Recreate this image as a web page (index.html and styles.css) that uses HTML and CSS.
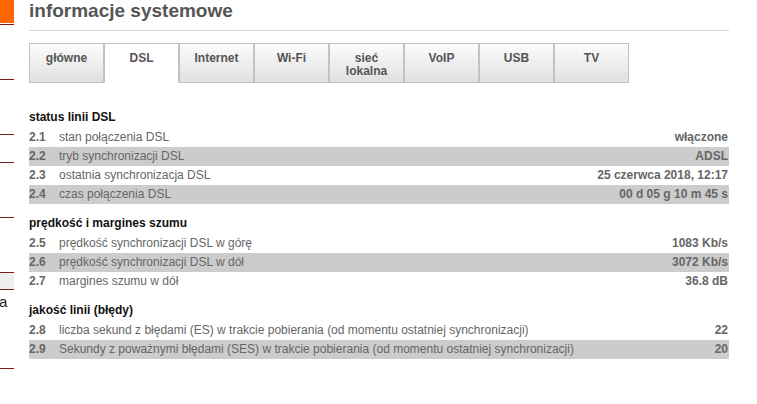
FILE: index.html
```html
<!DOCTYPE html>
<html lang="pl">
<head>
<meta charset="utf-8">
<title>informacje systemowe</title>
<link rel="stylesheet" href="styles.css">
</head>
<body>
<div class="page">
  <nav class="side">
    <div class="side-logo"></div>
    <div class="side-item h55"></div>
    <div class="side-item h55"></div>
    <div class="side-item h28"></div>
    <div class="side-item h55"></div>
    <div class="side-item h55"></div>
    <div class="side-item side-last">
      <div class="side-band"></div>
      <div class="side-text">a</div>
    </div>
  </nav>
  <main class="content">
    <h1 class="title">informacje systemowe</h1>
    <ul class="tabs">
      <li class="tab">główne</li>
      <li class="tab active">DSL</li>
      <li class="tab">Internet</li>
      <li class="tab">Wi-Fi</li>
      <li class="tab">sieć<br>lokalna</li>
      <li class="tab">VoIP</li>
      <li class="tab">USB</li>
      <li class="tab">TV</li>
    </ul>

    <section class="group first">
      <h2 class="group-title">status linii DSL</h2>
      <div class="rows">
        <div class="row"><span class="num">2.1</span><span class="label">stan połączenia DSL</span><span class="val">włączone</span></div>
        <div class="row"><span class="num">2.2</span><span class="label">tryb synchronizacji DSL</span><span class="val">ADSL</span></div>
        <div class="row"><span class="num">2.3</span><span class="label">ostatnia synchronizacja DSL</span><span class="val">25 czerwca 2018, 12:17</span></div>
        <div class="row"><span class="num">2.4</span><span class="label">czas połączenia DSL</span><span class="val">00 d 05 g 10 m 45 s</span></div>
      </div>
    </section>

    <section class="group">
      <h2 class="group-title">prędkość i margines szumu</h2>
      <div class="rows">
        <div class="row"><span class="num">2.5</span><span class="label">prędkość synchronizacji DSL w górę</span><span class="val">1083 Kb/s</span></div>
        <div class="row"><span class="num">2.6</span><span class="label">prędkość synchronizacji DSL w dół</span><span class="val">3072 Kb/s</span></div>
        <div class="row"><span class="num">2.7</span><span class="label">margines szumu w dół</span><span class="val">36.8 dB</span></div>
      </div>
    </section>

    <section class="group">
      <h2 class="group-title">jakość linii (błędy)</h2>
      <div class="rows">
        <div class="row"><span class="num">2.8</span><span class="label">liczba sekund z błędami (ES) w trakcie pobierania (od momentu ostatniej synchronizacji)</span><span class="val">22</span></div>
        <div class="row"><span class="num">2.9</span><span class="label">Sekundy z poważnymi błędami (SES) w trakcie pobierania (od momentu ostatniej synchronizacji)</span><span class="val">20</span></div>
      </div>
    </section>
  </main>
</div>
</body>
</html>
```

FILE: styles.css
```css
html, body {
  margin: 0;
  padding: 0;
  background: #ffffff;
}

body {
  font-family: "Liberation Sans", Arial, sans-serif;
  font-size: 12px;
  color: #666666;
}

.page {
  display: flex;
  align-items: flex-start;
}

/* left navigation (cropped) */
.side {
  width: 14px;
  flex: 0 0 14px;
  display: flex;
  flex-direction: column;
  overflow: hidden;
}

.side-logo {
  height: 23px;
  background: #ff6600;
  border-bottom: 1px solid #ffffff;
}

.side-item {
  border-top: 1px solid #7d1d1d;
  box-sizing: border-box;
}

.h55 { height: 55px; }
.h28 { height: 28px; }

.side-last {
  height: 97px;
  border-bottom: 1px solid #7d1d1d;
}

.side-band {
  height: 16px;
  background: #eeeeee;
  border-bottom: 1px solid #7d1d1d;
}

.side-text {
  font-size: 15px;
  line-height: 18px;
  padding-top: 3px;
  color: #222222;
  margin-left: -1px;
}

/* main content */
.content {
  width: 700px;
  margin-left: 15px;
}

.title {
  margin: 0;
  font-size: 19px;
  line-height: 22px;
  font-weight: bold;
  color: #555555;
  padding-bottom: 8px;
  border-bottom: 1px solid #d3d3d3;
}

.tabs {
  list-style: none;
  margin: 12px 0 0;
  padding: 0;
  display: flex;
}

.tab {
  box-sizing: border-box;
  width: 75px;
  height: 40px;
  padding-top: 8px;
  border: 1px solid #c2c2c2;
  background: linear-gradient(#fcfcfc, #e0e0e0);
  text-align: center;
  font-weight: bold;
  font-size: 12px;
  line-height: 13px;
  color: #555555;
}

.tab.active {
  background: #ffffff;
  border-bottom-color: #ffffff;
}

.group {
  margin-top: 10px;
}

.group.first {
  margin-top: 25px;
}

.group-title {
  margin: 0 0 1px;
  font-size: 12px;
  line-height: 19px;
  font-weight: bold;
  color: #111111;
}

.row {
  display: grid;
  grid-template-columns: 30px 1fr auto;
  height: 19px;
  line-height: 19px;
  white-space: nowrap;
}

.row:nth-child(even) {
  background: #cccccc;
}

.num {
  font-weight: bold;
  color: #666666;
}

.label {
  color: #666666;
  overflow: hidden;
}

.val {
  font-weight: bold;
  color: #666666;
  text-align: right;
  padding-right: 1px;
}
```
